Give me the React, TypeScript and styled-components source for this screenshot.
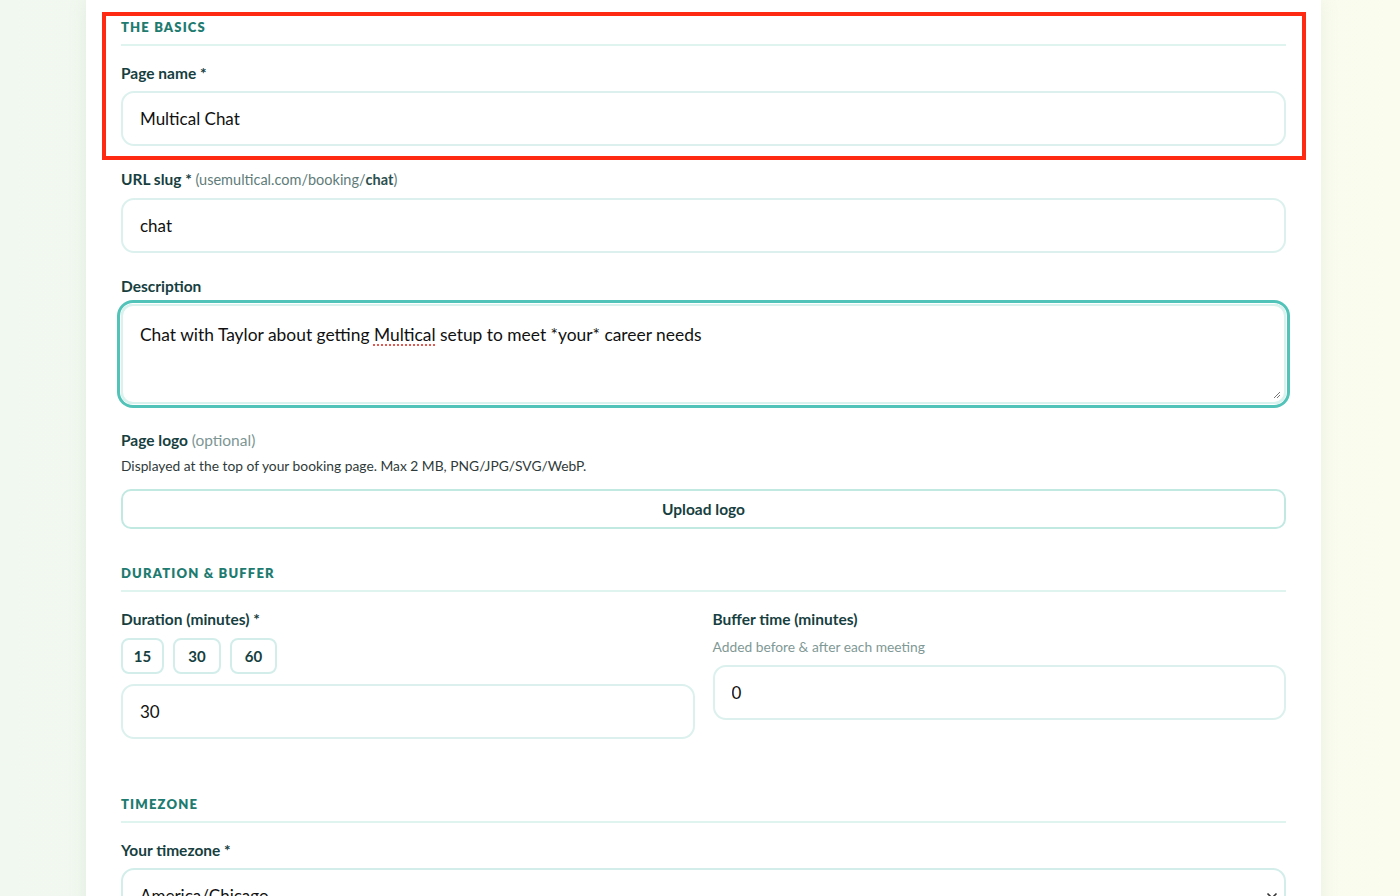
import styled, { createGlobalStyle } from "styled-components";

const GlobalStyle = createGlobalStyle`
  html, body {
    margin: 0;
    padding: 0;
    height: 100%;
    overflow: hidden;
  }
  body {
    background: linear-gradient(90deg, #f1f8ef 0%, #f6faf0 50%, #fafcee 100%);
    font-family: "Lato", "Noto Sans", sans-serif;
    color: #173f3f;
  }
`;

const Page = styled.div`
  padding-left: 86px;
  width: 1235px;
`;

const Card = styled.div`
  background: #ffffff;
  box-shadow: 0 0 18px rgba(120, 160, 140, 0.12);
  padding: 19px 35px 40px;
`;

const Section = styled.section<{ $top?: number }>`
  margin-top: ${(p) => p.$top ?? 0}px;
`;

const Highlight = styled.div`
  position: relative;

  &::after {
    content: "";
    position: absolute;
    top: -7px;
    left: -19px;
    right: -20px;
    bottom: -14px;
    border: 4px solid #ff2a12;
    pointer-events: none;
  }
`;

const SectionTitle = styled.h2`
  margin: 0;
  padding-bottom: 9px;
  border-bottom: 2px solid #dff3ef;
  font-size: 13px;
  font-weight: 800;
  letter-spacing: 0.09em;
  text-transform: uppercase;
  color: #1e7b70;
  line-height: 16px;
`;

const Field = styled.div<{ $top?: number }>`
  margin-top: ${(p) => p.$top ?? 24}px;
  display: flex;
  flex-direction: column;
`;

const Label = styled.label`
  font-size: 15.5px;
  font-weight: 700;
  line-height: 20px;
  color: #173f3f;
`;

const Muted = styled.span`
  font-size: 14.5px;
  font-weight: 400;
  color: #5f7c7a;

  b {
    font-weight: 700;
    color: #2d4f4e;
  }
`;

const Optional = styled.span`
  font-weight: 400;
  color: #7d9694;
`;

const Help = styled.div<{ $muted?: boolean }>`
  margin-top: ${(p) => (p.$muted ? 9 : 7)}px;
  font-size: 13.8px;
  line-height: 18px;
  color: ${(p) => (p.$muted ? "#7f9996" : "#2f3b3a")};
`;

const Input = styled.input<{ $gap?: number }>`
  margin-top: ${(p) => p.$gap ?? 8}px;
  box-sizing: border-box;
  height: 55px;
  width: 100%;
  padding: 0 17px;
  border: 2px solid #dcf1ed;
  border-radius: 13px;
  background: #fff;
  font-family: inherit;
  font-size: 17px;
  color: #111;
  outline: none;
`;

const TextArea = styled.div`
  position: relative;
  margin-top: 8px;
  box-sizing: border-box;
  height: 100px;
  padding: 18px 17px;
  border: 2px solid #d9f2ee;
  border-radius: 12px;
  box-shadow: 0 0 0 1px #ffffff, 0 0 0 4px #52c3b8;
  font-size: 17.4px;
  line-height: 22px;
  color: #111;
`;

const Misspelled = styled.span`
  text-decoration: underline dotted #e0433b;
  text-underline-offset: 4px;
`;

const Grip = styled.svg`
  position: absolute;
  right: 3px;
  bottom: 3px;
`;

const UploadButton = styled.button`
  margin-top: 14px;
  height: 40px;
  width: 100%;
  border: 2px solid #c2e8e2;
  border-radius: 10px;
  background: #fff;
  font-family: inherit;
  font-size: 15.5px;
  font-weight: 700;
  color: #173f3f;
`;

const Columns = styled.div`
  display: grid;
  grid-template-columns: 1fr 1fr;
  column-gap: 18px;
`;

const Chips = styled.div`
  margin-top: 9px;
  display: flex;
  gap: 9px;
`;

const Chip = styled.button<{ $w: number }>`
  width: ${(p) => p.$w}px;
  height: 36px;
  border: 2px solid #d3eeea;
  border-radius: 8px;
  background: #fff;
  font-family: inherit;
  font-size: 15px;
  font-weight: 700;
  color: #173f3f;
`;

const SelectBox = styled.div`
  position: relative;
  margin-top: 8px;
  box-sizing: border-box;
  height: 55px;
  padding: 0 17px;
  border: 2px solid #d3eeea;
  border-radius: 13px;
  display: flex;
  align-items: center;
  font-size: 17px;
  color: #111;
`;

const Chevron = styled.svg`
  position: absolute;
  right: 6px;
  top: 22px;
`;

export default function App() {
  return (
    <>
      <GlobalStyle />
      <Page>
        <Card>
          <Section>
            <Highlight>
              <SectionTitle>The basics</SectionTitle>
              <Field $top={17}>
                <Label>Page name *</Label>
                <Input defaultValue="Multical Chat" />
              </Field>
            </Highlight>
            <Field $top={23}>
              <Label>
                URL slug * <Muted>(usemultical.com/booking/<b>chat</b>)</Muted>
              </Label>
              <Input defaultValue="chat" />
            </Field>
            <Field $top={23}>
              <Label>Description</Label>
              <TextArea>
                Chat with Taylor about getting <Misspelled>Multical</Misspelled> setup to meet
                *your* career needs
                <Grip width="9" height="9" viewBox="0 0 9 9">
                  <path d="M8 2 L2 8 M8 5 L5 8" stroke="#777" strokeWidth="1" />
                </Grip>
              </TextArea>
            </Field>
            <Field $top={26}>
              <Label>
                Page logo <Optional>(optional)</Optional>
              </Label>
              <Help>Displayed at the top of your booking page. Max 2 MB, PNG/JPG/SVG/WebP.</Help>
              <UploadButton>Upload logo</UploadButton>
            </Field>
          </Section>

          <Section $top={36}>
            <SectionTitle>Duration &amp; Buffer</SectionTitle>
            <Columns>
              <Field $top={17}>
                <Label>Duration (minutes) *</Label>
                <Chips>
                  <Chip $w={43}>15</Chip>
                  <Chip $w={48}>30</Chip>
                  <Chip $w={47}>60</Chip>
                </Chips>
                <Input $gap={10} defaultValue="30" />
              </Field>
              <Field $top={17}>
                <Label>Buffer time (minutes)</Label>
                <Help $muted>Added before &amp; after each meeting</Help>
                <Input $gap={9} defaultValue="0" />
              </Field>
            </Columns>
          </Section>

          <Section $top={57}>
            <SectionTitle>Timezone</SectionTitle>
            <Field $top={17}>
              <Label>Your timezone *</Label>
              <SelectBox>
                America/Chicago
                <Chevron width="12" height="8" viewBox="0 0 12 8">
                  <path d="M1.5 1.5 L6 6 L10.5 1.5" fill="none" stroke="#333" strokeWidth="1.6" />
                </Chevron>
              </SelectBox>
            </Field>
          </Section>
        </Card>
      </Page>
    </>
  );
}
